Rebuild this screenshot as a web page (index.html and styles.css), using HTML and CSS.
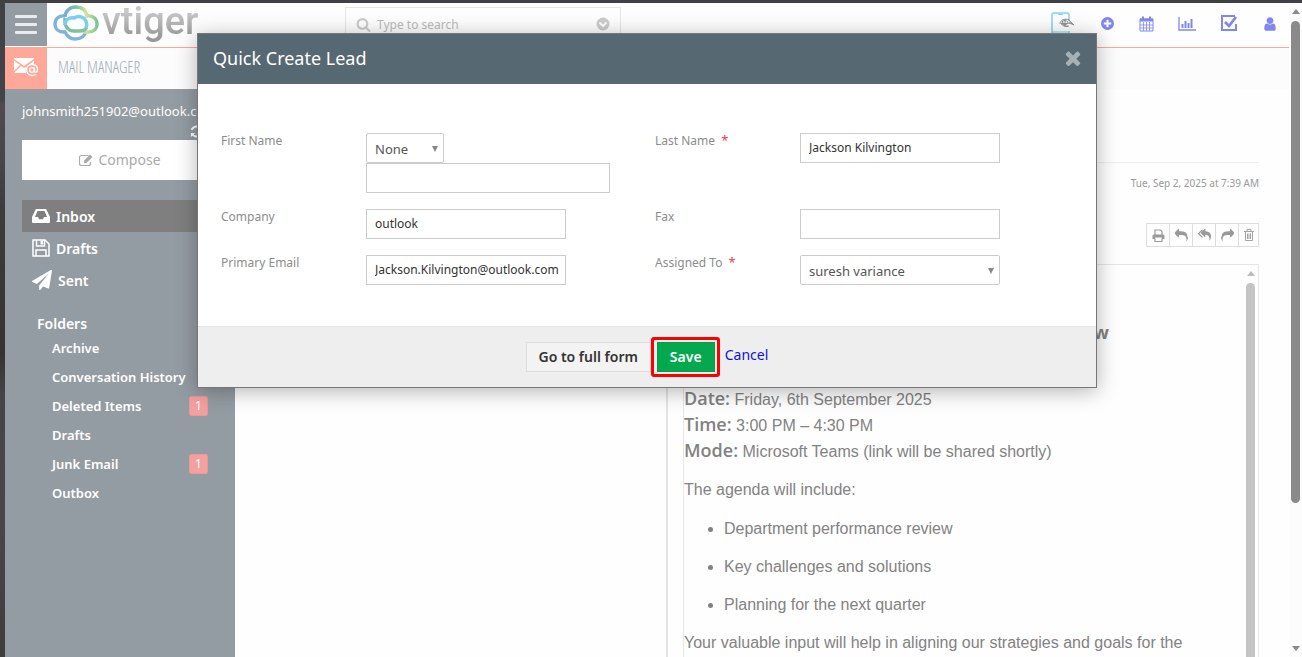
FILE: index.html
```html
<!DOCTYPE html>
<html lang="en">
<head>
<meta charset="utf-8">
<title>Mail Manager</title>
<link rel="stylesheet" href="styles.css">
</head>
<body>
<svg class="defs" aria-hidden="true">
  <defs>
    <linearGradient id="cloudA" x1="0" y1="0" x2="1" y2="0"><stop offset="0" stop-color="#7aa9d8"/><stop offset=".35" stop-color="#74c3a6"/><stop offset=".65" stop-color="#d3e493"/><stop offset="1" stop-color="#7cc49a"/></linearGradient>
    <linearGradient id="cloudB" x1="0" y1="0" x2="1" y2="0"><stop offset="0" stop-color="#7cbf9a"/><stop offset="1" stop-color="#7cc8a0"/></linearGradient>
    <symbol id="reply" viewBox="0 0 1792 1792"><path d="M1792 1120q0 166-127 451-3 7-10.5 24t-13.5 30-13 22q-12 17-28 17-15 0-23.5-10t-8.5-25q0-9 2.5-26.5t2.5-23.5q5-68 5-123 0-112-19.5-200.5t-54-153.5-89-112-118-78.5-147-50-175.5-24.5-201-7h-224v256q0 26-19 45t-45 19-45-19l-512-512q-19-19-19-45t19-45l512-512q19-19 45-19t45 19 19 45v256h224q713 0 875 403 53 134 53 333z"/></symbol>
  </defs>
</svg>
<div class="desktop">
  <div class="app">
    <header class="topbar">
      <button class="menu" aria-label="Menu"><span></span><span></span><span></span></button>
      <a class="logo" href="#">
        <svg width="46" height="36" viewBox="0 0 46 36" fill="none" stroke-width="3.400">
          <path d="M12 11C6 10 2 14 2 19c0 5 4 8 9 8h1c2 4 5 7 10 7 6 0 10-3 11-8" stroke="#7fb3dc"/>
          <path d="M12 12C12 6 17 2 23 2c6 0 10 3 11 9 6-1 10 3 10 8 0 5-4 8-9 8h-4" stroke="url(#cloudA)"/>
          <path d="M12 13c-1 8 3 13 9 13h6c4 0 6-2 7-4" stroke="url(#cloudB)"/>
          <path d="M12 20c0-5 4-8 9-7 5-3 10-1 12 3 1 3 1 5 0 7" stroke="#7ccdf3"/>
        </svg>
        <span class="brand">vtiger</span>
      </a>
      <div class="search">
        <svg width="15" height="15" viewBox="0 0 1792 1792"><path d="M1216 832q0-185-131.5-316.5t-316.5-131.5-316.5 131.5-131.5 316.5 131.5 316.5 316.5 131.5 316.5-131.5 131.5-316.5zm512 832q0 52-38 90t-90 38q-54 0-90-38l-343-342q-179 124-399 124-143 0-273.5-55.5t-225-150-150-225-55.5-273.5 55.5-273.5 150-225 225-150 273.5-55.5 273.5 55.5 225 150 150 225 55.5 273.5q0 220-124 399l343 343q37 37 37 90z"/></svg>
        <input type="search" aria-label="Search" placeholder="Type to search">
        <svg width="14" height="14" viewBox="0 0 14 14"><circle cx="7" cy="7" r="6.5"/><path d="M3.5 5.5L7 9l3.500-3.500" fill="none" stroke="#fff" stroke-width="2"/></svg>
      </div>
      <nav class="tools">
        <a href="#" aria-label="Mobile"><svg width="26" height="24" viewBox="0 0 26 24" fill="none"><path d="M19 8V3a2 2 0 0 0-2-2H4a2 2 0 0 0-2 2v18a2 2 0 0 0 2 2h13a2 2 0 0 0 2-2v-2" stroke="#83cff5" stroke-width="1.500"/><path d="M8 2.500h5M2 20h17" stroke="#83cff5"/><g stroke="#888" stroke-width=".9"><path d="M10 12c0-4 5-6 9-4l5 5-5-2M12 9c2 3 1 6 6 5M15 7v7M11 12l9-1M18 7l4 5M11 11c1 3 4 4 8 3"/><ellipse cx="15" cy="10.500" rx="3" ry="2"/></g></svg></a>
        <a href="#" aria-label="Add"><svg width="15" height="15" viewBox="0 0 1792 1792"><path d="M1344 960v-128q0-26-19-45t-45-19h-256v-256q0-26-19-45t-45-19h-128q-26 0-45 19t-19 45v256h-256q-26 0-45 19t-19 45v128q0 26 19 45t45 19h256v256q0 26 19 45t45 19h128q26 0 45-19t19-45v-256h256q26 0 45-19t19-45zm320-64q0 209-103 385.500t-279.500 279.500-385.500 103-385.500-103-279.500-279.500-103-385.500 103-385.500 279.500-279.500 385.500-103 385.500 103 279.500 279.500 103 385.500z"/></svg></a>
        <a href="#" aria-label="Calendar"><svg width="15" height="16" viewBox="0 0 15 16" fill="none" stroke="currentColor"><path d="M1 3h13v12H1z"/><path d="M1 4h13" stroke-width="3"/><path d="M4 .5v3M11 .5v3" stroke-width="2"/><path d="M4.500 6v9M7.500 6v9M10.500 6v9M1 9h13M1 12h13" stroke-width=".8"/></svg></a>
        <a href="#" aria-label="Reports"><svg width="18" height="14" viewBox="0 0 18 14" fill="none" stroke="currentColor"><path d="M1 0v13h17" stroke-width="1.300"/><path d="M4.500 11V7M7.500 11V4M10.500 11V6M13.500 11V2" stroke-width="2"/></svg></a>
        <a href="#" aria-label="Tasks"><svg width="18" height="17" viewBox="0 0 18 17" fill="none" stroke="currentColor"><path d="M15 1H2v14h14V9" stroke-width="2"/><path d="M5 7l4 4 7-9" stroke-width="2.800"/></svg></a>
        <a href="#" aria-label="User"><svg width="16" height="16" viewBox="0 0 1792 1792"><path d="M1536 1399q0 109-62.500 187t-150.500 78h-854q-88 0-150.500-78t-62.500-187q0-85 8.500-160.500t31.500-152 58.500-131 94-89 134.500-34.500q131 128 313 128t313-128q76 0 134.500 34.500t94 89 58.500 131 31.500 152 8.500 160.500zm-256-887q0 159-112.500 271.500t-271.500 112.500-271.500-112.500-112.500-271.500 112.500-271.500 271.500-112.500 271.500 112.500 112.500 271.500z"/></svg></a>
      </nav>
    </header>
    <div class="module">
      <span class="module-icon"><svg width="25" height="20" viewBox="0 0 25 20"><path d="M0 1h20v1l-10 7L0 2zM0 3.500l6 4.500-6 6zM20 3.500V7l-4 .5-1.500.5zM7 9l3 2 3-1.500c-1 1.500-1.500 4-1 6.500H0z" fill="#fff"/><g fill="none" stroke="#fff" stroke-width="1.300"><circle cx="18" cy="13" r="2.300"/><path d="M20.500 10.500v3.500c0 2 3 1.500 3-1.500 0-3-2-5-5.500-5s-5.500 2.500-5.500 5.500 2.500 5.500 5.500 5.500c1.500 0 3-.3 4-1"/></g></svg></span>
      <h1>MAIL MANAGER</h1>
    </div>
    <div class="main">
      <aside class="sidebar">
        <div class="account">johnsmith251902@outlook.com</div>
        <button class="refresh" aria-label="Refresh"><svg width="13" height="13" viewBox="0 0 14 14" fill="none" stroke="#fff" stroke-width="2.200"><path d="M12 5A5.300 5.300 0 0 0 3 3.500L1.500 5M2 9a5.300 5.300 0 0 0 9 1.500L12.500 9"/><path d="M13 1v4.500H8.500zM1 13V8.500h4.500z" fill="#fff" stroke="none"/></svg></button>
        <button class="compose"><svg width="15" height="13" viewBox="0 0 15 13" fill="none" stroke="currentColor"><path d="M9.500 1.500H2.500a2 2 0 0 0-2 2v6a2 2 0 0 0 2 2h7a2 2 0 0 0 2-2V8" stroke-width="1.200"/><path d="M5 6.500L11 .5l2.500 2.500-6 6H5z" fill="currentColor" stroke="none"/></svg>Compose</button>
        <nav class="boxes">
          <a class="active" href="#"><svg width="18" height="16" viewBox="0 0 18 16"><path d="M4.500 1h9a1 1 0 0 1 1 .7L18 9v5a1 1 0 0 1-1 1H1a1 1 0 0 1-1-1V9l3.500-7.300a1 1 0 0 1 1-.7zM5.500 3L3 9h3l1 2.200h4L12 9h3l-2.500-6z" fill-rule="evenodd"/></svg>Inbox</a>
          <a href="#"><svg width="18" height="18" viewBox="0 0 18 18" fill="none" stroke="#fff" stroke-width="1.500"><path d="M1 1h12l4 4v12H1z"/><path d="M4 17v-6h10v6M4.500 1v6h8V1"/><path d="M8.500 1.500h2.500v4H8.500z" fill="#fff" stroke="none"/></svg>Drafts</a>
          <a href="#"><svg width="20" height="20" viewBox="0 0 1792 1792"><path d="M1764 11q33 24 27 64l-256 1536q-5 29-32 45-14 8-31 8-11 0-24-5l-453-185-242 295q-18 23-49 23-13 0-22-4-19-7-30.500-23.500t-11.500-36.500v-349l864-1059-1069 925-395-162q-37-14-40-55-2-40 32-59l1664-960q15-9 32-9 20 0 36 11z"/></svg>Sent</a>
        </nav>
        <h2>Folders</h2>
        <nav class="folders">
          <a href="#">Archive</a>
          <a href="#">Conversation History</a>
          <a href="#">Deleted Items<span class="badge">1</span></a>
          <a href="#">Drafts</a>
          <a href="#">Junk Email<span class="badge">1</span></a>
          <a href="#">Outbox</a>
        </nav>
      </aside>
      <section class="list"></section>
      <section class="message">
        <div class="subject"></div>
        <time class="date">Tue, Sep 2, 2025 at 7:39 AM</time>
        <div class="actions">
          <button aria-label="Print"><svg width="13" height="13" viewBox="0 0 13 13" fill="none" stroke="currentColor"><path d="M3 6V1h5.500L10 2.500V6M3 9.500v3h7v-3" stroke-width="1.200"/><path d="M.5 10V7a1.500 1.500 0 0 1 1.500-1.500h9A1.500 1.500 0 0 1 12.500 7v3H10V8.500H3V10z" fill="currentColor" stroke="none"/></svg></button>
          <button aria-label="Reply"><svg width="13" height="13"><use href="#reply"/></svg></button>
          <button aria-label="Reply all"><svg width="13" height="13" viewBox="0 0 1792 1792"><path d="M640 1082v70q0 42-39 59-13 5-25 5-27 0-45-19l-512-512q-19-19-19-45t19-45l512-512q29-31 70-14 39 17 39 59v69l-397 398q-19 19-19 45t19 45zm1152-58q0 58-17 133.500t-38.500 138-48 125-40.500 90.500l-20 40q-8 17-28 17-6 0-9-1-25-8-23-34 43-400-106-565-64-71-170.500-110.500t-267.500-52.500v251q0 42-39 59-13 5-25 5-27 0-45-19l-512-512q-19-19-19-45t19-45l512-512q29-31 70-14 39 17 39 59v262q411 28 599 221 169 173 169 509z"/></svg></button>
          <button aria-label="Forward"><svg width="13" height="13"><use href="#reply" transform="matrix(-1 0 0 1 13 0)"/></svg></button>
          <button aria-label="Delete"><svg width="10" height="12" viewBox="0 0 10 12" fill="none" stroke="currentColor"><path d="M0 2.500h10M3 2V.5h4V2M1.500 3v8.500h7V3M3.500 4.500V10M5 4.500V10M6.500 4.500V10" stroke-width=".9"/></svg></button>
        </div>
        <div class="frame">
          <article class="mail">
            <h3>w</h3>
            <p class="facts"><b>Date:</b> Friday, 6th September 2025<br><b>Time:</b> 3:00 PM – 4:30 PM<br><b>Mode:</b> Microsoft Teams (link will be shared shortly)</p>
            <p>The agenda will include:</p>
            <ul>
              <li>Department performance review</li>
              <li>Key challenges and solutions</li>
              <li>Planning for the next quarter</li>
            </ul>
            <p>Your valuable input will help in aligning our strategies and goals for the</p>
          </article>
          <div class="inner-scroll"><span class="arrow up"></span><span class="thumb"></span></div>
        </div>
      </section>
    </div>
  </div>
  <div class="scroll"><span class="arrow up"></span><span class="thumb"></span><span class="arrow down"></span></div>
</div>

<form class="modal" role="dialog" aria-labelledby="modal-title">
  <div class="modal-head">
    <h2 id="modal-title">Quick Create Lead</h2>
    <button type="button" aria-label="Close"><svg width="22" height="22" viewBox="0 0 1792 1792"><path d="M1490 1322q0 40-28 68l-136 136q-28 28-68 28t-68-28l-294-294-294 294q-28 28-68 28t-68-28l-136-136q-28-28-28-68t28-68l294-294-294-294q-28-28-28-68t28-68l136-136q28-28 68-28t68 28l294 294 294-294q28-28 68-28t68 28l136 136q28 28 28 68t-28 68l-294 294 294 294q28 28 28 68z"/></svg></button>
  </div>
  <div class="fields">
    <label for="first">First Name</label>
    <div class="stack">
      <div class="pick short"><select aria-label="Salutation"><option>None</option></select></div>
      <input id="first" class="long" type="text">
    </div>
    <label for="last">Last Name <i>*</i></label>
    <div><input id="last" type="text" value="Jackson Kilvington"></div>
    <label for="company">Company</label>
    <div><input id="company" type="text" value="outlook"></div>
    <label for="fax">Fax</label>
    <div><input id="fax" type="text"></div>
    <label for="email">Primary Email</label>
    <div><input id="email" type="text" value="Jackson.Kilvington@outlook.com"></div>
    <label for="owner">Assigned To <i>*</i></label>
    <div class="pick"><select id="owner"><option>suresh variance</option></select></div>
  </div>
  <div class="modal-foot">
    <button type="button" class="full">Go to full form</button>
    <span class="marked"><button type="submit" class="save">Save</button></span>
    <a href="#">Cancel</a>
  </div>
</form>
</body>
</html>
```
FILE: styles.css
```css
* { box-sizing: border-box; }
body { margin: 0; font: 13px/20px "Noto Sans", "Open Sans", sans-serif; color: #888; }
button, input, select { font: inherit; margin: 0; }
button { border: 0; padding: 0; background: none; color: inherit; }
a { text-decoration: none; color: inherit; }
h1, h2, h3, p, ul { margin: 0; }
svg { display: block; fill: currentColor; flex: none; }
svg[fill="none"] { fill: none; }
.defs { position: absolute; width: 0; height: 0; }

.desktop {
  height: 100vh; overflow: hidden; display: flex;
  padding: 3px 0 0 5px;
  background: linear-gradient(#404144, #43434a 15%, #514a4e 16%, #45474b 24%, #3c3c3a 32%, #35342e 54%, #454548 60%, #4a4648 80%, #3d3d3b);
}
.app { flex: 1; min-width: 0; display: flex; flex-direction: column; background: #fefefe; }

.topbar { display: flex; align-items: center; height: 45px; flex: none; border-bottom: 1px solid #ffa89a; }
.menu { width: 42px; height: 43px; align-self: flex-start; background: #949ca3; display: flex; flex-direction: column; align-items: center; justify-content: center; gap: 5px; }
.menu span { width: 22px; height: 3px; border-radius: 1px; background: #e9ebec; }
.logo { display: flex; align-items: flex-start; align-self: flex-start; width: 298px; padding-left: 6px; gap: 3px; }
.logo svg { margin-top: 2px; }
.brand { font: 500 38px/36px Roboto, sans-serif; padding-bottom: 6px; background: linear-gradient(#c8c8c8 20%, #999 80%); background-clip: text; -webkit-background-clip: text; color: transparent; }
.search { width: 276px; height: 34px; border: 1px solid #e6e6e6; display: flex; align-items: center; gap: 6px; padding: 0 10px; color: #ccc; align-self: flex-start; margin-top: 4px; }
.search input { flex: 1; min-width: 0; height: 22px; border: 0; padding: 1px 0 0; outline: 0; background: none; font-size: 12px; }
.search input::placeholder { color: #bbb; opacity: 1; }
.tools { margin-left: auto; display: flex; align-items: center; color: #8187ef; padding-bottom: 3px; padding-right: 11px; gap: 24px; }

.module { display: flex; height: 41px; flex: none; background: #fcfcfc; align-items: center; }
.module-icon { width: 42px; height: 41px; padding-bottom: 4px; display: flex; align-items: center; justify-content: center; background: #ffa899; }
.module h1 { font: 300 16px/24px "Open Sans Condensed Light", "Open Sans Condensed", sans-serif; color: #a3acb8; margin: 0 0 4px 11px; }

.main { flex: 1; min-height: 0; display: grid; grid-template-columns: 230px 433px minmax(0, 1fr); }
.sidebar { background: #949ca3; color: #fff; padding: 12px 17px; min-width: 0; }
.account { line-height: 20px; }
.refresh { display: block; margin: 4px 0 0 168px; height: 13px; }
.compose { width: 196px; height: 40px; margin-top: 2px; background: #fff; color: #aaa; font-size: 14px; display: flex; align-items: center; justify-content: center; gap: 4px; }
.boxes { margin-top: 20px; font-weight: 600; font-size: 14px; }
.boxes a { display: flex; align-items: center; gap: 6px; height: 32px; padding: 2px 0 0 10px; }
.boxes svg { margin-bottom: 3px; }
.boxes .active { background: #7f7f7f; }
.sidebar h2 { font-size: 14px; line-height: 20px; font-weight: 600; margin: 18px 0 0 15px; }
.folders { font-weight: 600; padding: 0 10px 0 30px; margin-top: -1px; }
.folders a { display: flex; align-items: center; justify-content: space-between; height: 29px; }
.badge { width: 19px; height: 20px; border: 1px solid #e99797; border-radius: 2px; background: #f3a0a0; font-weight: 400; font-size: 12px; line-height: 18px; text-align: center; }

.list { border-right: 2px solid #e4e4e4; }
.message { display: flex; flex-direction: column; padding: 0 30px 0 15px; min-width: 0; min-height: 0; }
.subject { height: 74px; border-bottom: 1px solid #eee; flex: none; }
.date { align-self: flex-end; font-size: 10px; line-height: 20px; margin-top: 10px; color: #999; }
.actions { display: flex; align-self: flex-end; margin-top: 30px; border: 1px solid #ddd; color: #999; }
.actions button { width: 23px; height: 22px; display: flex; align-items: center; justify-content: center; }
.actions button:first-child { width: 22px; }
.actions button:last-child { width: 20px; }
.actions button + button { border-left: 1px solid #ddd; }
.frame { flex: 1; min-height: 0; margin-top: 17px; border: 1px solid #e6e6e6; border-bottom: 0; display: flex; overflow: hidden; }
.mail { flex: 1; min-width: 0; font: 16px/26px "Liberation Sans", Arial, sans-serif; color: #828282; }
.mail h3 { font: 700 18px/26px "Noto Sans", sans-serif; text-align: right; padding-right: 134px; margin: 54px 0 41px; }
.mail b { font: 600 18px/24px "Open Sans", sans-serif; }
.mail p { white-space: nowrap; margin-bottom: 13px; }
.mail .facts { line-height: 25px; }
.mail ul { padding-left: 40px; }
.mail li { margin-bottom: 12px; }

.inner-scroll, .scroll { display: flex; flex-direction: column; align-items: center; gap: 4px; }
.inner-scroll { width: 15px; padding-top: 6px; color: #bbb; }
.inner-scroll .thumb { width: 9px; flex: 1; border-radius: 5px 5px 0 0; background: #c4c4c4; margin-top: 3px; }
.scroll { width: 13px; padding: 6px 0; background: #fcfcfc; color: #8a8a8a; }
.scroll .thumb { width: 9px; height: 75%; border-radius: 5px; background: #8a8a8a; margin-top: 3px; }
.arrow { border: 4px solid transparent; }
.up { border-top: 0; border-bottom: 5px solid currentColor; }
.down { border-bottom: 0; border-top: 5px solid currentColor; margin-top: auto; }

.modal { position: absolute; left: 197px; right: 205px; top: 33px; background: #fff; border: 1px solid #777; box-shadow: 0 3px 20px rgba(0, 0, 0, .3); }
.modal-head { height: 50px; background: #566872; display: flex; align-items: center; justify-content: space-between; padding: 0 12px 3px 15px; color: #a6b0b5; }
.modal-head h2 { font-size: 18px; line-height: 24px; font-weight: 400; color: #fff; }
.fields { display: grid; grid-template-columns: 145px 289px 145px minmax(0, 1fr); row-gap: 16px; padding: 49px 23px 41px; }
.fields label { font-size: 12px; line-height: 16px; color: #8c8c8c; }
.fields i { color: #f0384a; font-style: normal; font-size: 13px; line-height: 1; margin-left: 3px; }
.fields input, .fields select { display: block; width: 200px; height: 30px; border: 1px solid #ccc; padding: 0 8px; background: #fff; color: #333; outline: 0; }
.fields input { font-size: 12px; padding: 0 4px 2px 8px; }
.fields .long { width: 244px; }
.fields select { appearance: none; color: #555; border-radius: 2px; padding-top: 2px; }
.pick { position: relative; width: 200px; }
.pick.short, .short select { width: 78px; }
.pick::after { content: ""; position: absolute; right: 6px; top: 13px; border: 3px solid transparent; border-top: 6px solid #888; border-bottom: 0; }
.modal-foot { height: 61px; border-top: 1px solid #e2e2e2; background: #eee; display: flex; justify-content: center; align-items: flex-start; padding: 15px 0; }
.full { width: 125px; height: 30px; border: 1px solid #ddd; background: #f3f3f3; color: #333; font-size: 14px; font-weight: 600; }
.marked { position: relative; margin: 0 10px 0 6px; }
.marked::after { content: ""; position: absolute; inset: -5px -5px -5px -6px; border: 3px solid #ff0000; border-radius: 3px; pointer-events: none; }
.save { display: block; width: 58px; height: 30px; border: 1px solid #0a9a47; background: #04a94f; color: #fff; font-size: 14px; font-weight: 600; }
.modal-foot a { color: #1111e0; font-size: 14px; line-height: 26px; }
```
